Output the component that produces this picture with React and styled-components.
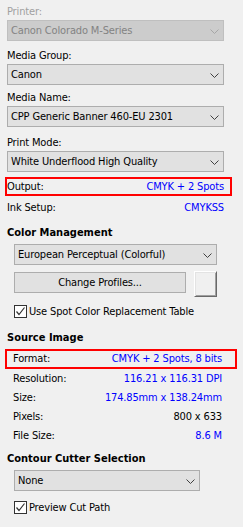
import React from 'react';
import styled, { createGlobalStyle } from 'styled-components';

const GlobalStyle = createGlobalStyle`
  html, body {
    margin: 0;
    padding: 0;
    background: #f0f0f0;
  }
  body {
    font-family: "DejaVu Sans Condensed", "DejaVu Sans", sans-serif;
    font-size: 11px;
    letter-spacing: -0.15px;
    color: #000;
  }
`;

const Chevron = ({ disabled }) => (
  <svg width="9" height="5" viewBox="0 0 9 5">
    <polyline
      points="0.5,0.5 4.5,4.5 8.5,0.5"
      fill="none"
      stroke={disabled ? '#a6a6a6' : '#404040'}
      strokeWidth="1"
    />
  </svg>
);

const Check = () => (
  <svg width="11" height="11" viewBox="0 0 11 11">
    <polyline points="1.5,5.5 4,8.5 9.5,1.5" fill="none" stroke="#333" strokeWidth="1.2" />
  </svg>
);

function Dropdown({ value, disabled, width }) {
  return (
    <SelectSC $disabled={disabled} $width={width}>
      <span>{value}</span>
      <Chevron disabled={disabled} />
    </SelectSC>
  );
}

function Field({ label, value, disabled, gap }) {
  return (
    <FieldSC $gap={gap}>
      <LabelSC $disabled={disabled}>{label}</LabelSC>
      <Dropdown value={value} disabled={disabled} />
    </FieldSC>
  );
}

export default function App() {
  return (
    <>
      <GlobalStyle />
      <PanelSC>
        <Field label="Printer:" value="Canon Colorado M-Series" disabled gap={0} />
        <Field label="Media Group:" value="Canon" gap={8} />
        <Field label="Media Name:" value="CPP Generic Banner 460-EU 2301" gap={6} />
        <Field label="Print Mode:" value="White Underflood High Quality" gap={9} />

        <InfoRowSC $highlight $reach={8} $trail={6} $top={5}>
          <span>Output:</span>
          <ValueSC>CMYK + 2 Spots</ValueSC>
        </InfoRowSC>
        <InfoRowSC $trail={0} $top={4}>
          <span>Ink Setup:</span>
          <ValueSC>CMYKSS</ValueSC>
        </InfoRowSC>

        <HeadingSC $top={10}>Color Management</HeadingSC>
        <IndentSC>
          <Dropdown value="European Perceptual (Colorful)" width={203} />
          <ButtonRowSC>
            <PushButtonSC>Change Profiles...</PushButtonSC>
            <SwatchSC />
          </ButtonRowSC>
          <CheckRowSC $top={8}>
            <CheckBoxSC>
              <Check />
            </CheckBoxSC>
            <span>Use Spot Color Replacement Table</span>
          </CheckRowSC>
        </IndentSC>

        <HeadingSC $top={12}>Source Image</HeadingSC>
        <InfoRowSC $highlight $reach={13} $trail={13} $inset={6} $top={0} $tall>
          <span>Format:</span>
          <ValueSC>CMYK + 2 Spots, 8 bits</ValueSC>
        </InfoRowSC>
        <DetailRowSC>
          <span>Resolution:</span>
          <ValueSC>116.21 x 116.31 DPI</ValueSC>
        </DetailRowSC>
        <DetailRowSC>
          <span>Size:</span>
          <ValueSC>174.85mm x 138.24mm</ValueSC>
        </DetailRowSC>
        <DetailRowSC>
          <span>Pixels:</span>
          <ValueSC $plain>800 x 633</ValueSC>
        </DetailRowSC>
        <DetailRowSC>
          <span>File Size:</span>
          <ValueSC>8.6 M</ValueSC>
        </DetailRowSC>

        <HeadingSC $top={6}>Contour Cutter Selection</HeadingSC>
        <IndentSC>
          <Dropdown value="None" width={186} />
          <CheckRowSC $top={10}>
            <CheckBoxSC>
              <Check />
            </CheckBoxSC>
            <span>Preview Cut Path</span>
          </CheckRowSC>
        </IndentSC>
      </PanelSC>
    </>
  );
}

const PanelSC = styled('div')`
  width: 243px;
  height: 527px;
  box-sizing: border-box;
  padding: 5px 0 0 7px;
  overflow: hidden;
`;

const FieldSC = styled('div')`
  margin-top: ${(p) => p.$gap}px;
  display: flex;
  flex-direction: column;
`;

const LabelSC = styled('div')`
  height: 13px;
  line-height: 13px;
  margin-bottom: 2px;
  color: ${(p) => (p.$disabled ? '#a0a0a0' : '#000')};
`;

const SelectSC = styled('div')`
  box-sizing: border-box;
  width: ${(p) => p.$width || 217}px;
  height: 21px;
  display: flex;
  align-items: center;
  justify-content: space-between;
  padding: 0 4px 0 3px;
  border: 1px solid ${(p) => (p.$disabled ? '#bfbfbf' : '#adadad')};
  background: ${(p) => (p.$disabled ? '#cccccc' : '#e1e1e1')};
  color: ${(p) => (p.$disabled ? '#838383' : '#000')};
  white-space: nowrap;

  svg {
    margin-top: 1px;
  }
`;

const InfoRowSC = styled('div')`
  box-sizing: border-box;
  margin-top: ${(p) => p.$top || 0}px;
  display: flex;
  justify-content: space-between;
  line-height: ${(p) => (p.$tall ? 16 : 15)}px;
  padding-left: ${(p) => p.$inset || 0}px;
  padding-right: ${(p) => p.$trail}px;
  ${(p) =>
    p.$highlight
      ? `
    border: 2px solid #ff0000;
    margin-left: -2px;
    width: ${217 + 2 + p.$reach}px;
  `
      : `
    width: 217px;
  `}
`;

const DetailRowSC = styled('div')`
  width: 217px;
  box-sizing: border-box;
  display: flex;
  justify-content: space-between;
  line-height: 19px;
  padding: 0 2px 0 6px;
`;

const ValueSC = styled('span')`
  color: ${(p) => (p.$plain ? '#000' : '#0000ff')};
`;

const HeadingSC = styled('div')`
  margin-top: ${(p) => p.$top}px;
  line-height: 15px;
  font-weight: bold;
  letter-spacing: 0;
  margin-bottom: 4px;
`;

const IndentSC = styled('div')`
  padding-left: 7px;
`;

const ButtonRowSC = styled('div')`
  display: flex;
  align-items: flex-start;
  margin-top: 6px;
  gap: 8px;
`;

const PushButtonSC = styled('div')`
  box-sizing: border-box;
  width: 172px;
  height: 21px;
  margin-top: 1px;
  border: 1px solid #adadad;
  background: #e1e1e1;
  display: flex;
  align-items: center;
  justify-content: center;
`;

const SwatchSC = styled('div')`
  box-sizing: border-box;
  width: 23px;
  height: 26px;
  border-top: 1px solid #ffffff;
  border-left: 1px solid #ffffff;
  border-right: 1px solid #696969;
  border-bottom: 1px solid #696969;
  box-shadow: inset 1px 1px 0 #e3e3e3, inset -1px -1px 0 #a0a0a0;
  background: #f0f0f0;
`;

const CheckRowSC = styled('div')`
  margin-top: ${(p) => p.$top}px;
  display: flex;
  align-items: center;
  gap: 2px;
  line-height: 13px;
`;

const CheckBoxSC = styled('div')`
  box-sizing: border-box;
  width: 13px;
  height: 13px;
  border: 1px solid #333;
  background: #fff;
  display: flex;
  align-items: center;
  justify-content: center;
`;
